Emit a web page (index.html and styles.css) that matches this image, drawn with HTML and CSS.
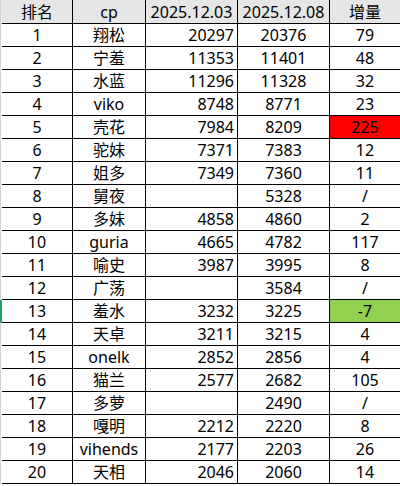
FILE: index.html
```html
<!DOCTYPE html>
<html lang="zh">
<head>
<meta charset="utf-8">
<link rel="stylesheet" href="styles.css">
</head>
<body>
<div class="sheet">
  <div class="row head"><div class="gut"></div><div class="c">排名</div><div class="c">cp</div><div class="c">2025.12.03</div><div class="c">2025.12.08</div><div class="c">增量</div></div>
  <div class="row"><div class="gut"></div><div class="c">1</div><div class="c">翔松</div><div class="c r">20297</div><div class="c">20376</div><div class="c">79</div></div>
  <div class="row"><div class="gut"></div><div class="c">2</div><div class="c">宁羞</div><div class="c r">11353</div><div class="c">11401</div><div class="c">48</div></div>
  <div class="row"><div class="gut"></div><div class="c">3</div><div class="c">水蓝</div><div class="c r">11296</div><div class="c">11328</div><div class="c">32</div></div>
  <div class="row"><div class="gut"></div><div class="c">4</div><div class="c">viko</div><div class="c r">8748</div><div class="c">8771</div><div class="c">23</div></div>
  <div class="row"><div class="gut"></div><div class="c">5</div><div class="c">壳花</div><div class="c r">7984</div><div class="c">8209</div><div class="c red">225</div></div>
  <div class="row"><div class="gut"></div><div class="c">6</div><div class="c">驼妹</div><div class="c r">7371</div><div class="c">7383</div><div class="c">12</div></div>
  <div class="row"><div class="gut"></div><div class="c">7</div><div class="c">姐多</div><div class="c r">7349</div><div class="c">7360</div><div class="c">11</div></div>
  <div class="row"><div class="gut"></div><div class="c">8</div><div class="c">舅夜</div><div class="c r"></div><div class="c">5328</div><div class="c">/</div></div>
  <div class="row"><div class="gut"></div><div class="c">9</div><div class="c">多妹</div><div class="c r">4858</div><div class="c">4860</div><div class="c">2</div></div>
  <div class="row"><div class="gut"></div><div class="c">10</div><div class="c">guria</div><div class="c r">4665</div><div class="c">4782</div><div class="c">117</div></div>
  <div class="row"><div class="gut"></div><div class="c">11</div><div class="c">喻史</div><div class="c r">3987</div><div class="c">3995</div><div class="c">8</div></div>
  <div class="row"><div class="gut"></div><div class="c">12</div><div class="c">广荡</div><div class="c r"></div><div class="c">3584</div><div class="c">/</div></div>
  <div class="row sel"><div class="gut"></div><div class="c">13</div><div class="c">羞水</div><div class="c r">3232</div><div class="c">3225</div><div class="c green">-7</div></div>
  <div class="row"><div class="gut"></div><div class="c">14</div><div class="c">天卓</div><div class="c r">3211</div><div class="c">3215</div><div class="c">4</div></div>
  <div class="row"><div class="gut"></div><div class="c">15</div><div class="c">onelk</div><div class="c r">2852</div><div class="c">2856</div><div class="c">4</div></div>
  <div class="row"><div class="gut"></div><div class="c">16</div><div class="c">猫兰</div><div class="c r">2577</div><div class="c">2682</div><div class="c">105</div></div>
  <div class="row"><div class="gut"></div><div class="c">17</div><div class="c">多萝</div><div class="c r"></div><div class="c">2490</div><div class="c">/</div></div>
  <div class="row"><div class="gut"></div><div class="c">18</div><div class="c">嘎明</div><div class="c r">2212</div><div class="c">2220</div><div class="c">8</div></div>
  <div class="row"><div class="gut"></div><div class="c">19</div><div class="c">vihends</div><div class="c r">2177</div><div class="c">2203</div><div class="c">26</div></div>
  <div class="row"><div class="gut"></div><div class="c">20</div><div class="c">天相</div><div class="c r">2046</div><div class="c">2060</div><div class="c">14</div></div>
</div>
</body>
</html>
```
FILE: styles.css
```css
html, body {
  margin: 0;
  padding: 0;
  background: #fff;
}
.sheet {
  width: 400px;
  height: 486px;
  overflow: hidden;
  font-family: "Noto Sans", "Noto Sans CJK SC", sans-serif;
  font-size: 16px;
  color: #000;
}
.row {
  display: grid;
  grid-template-columns: 2px 71px 73px 92px 92px 70px;
  height: 23px;
}
.row.head {
  height: 24px;
  background: #e7e6e6;
}
.gut {
  background: linear-gradient(to right, #d4d4d4 0 1px, #fff 1px 2px);
}
.head .gut {
  background: linear-gradient(to right, #d4d4d4 0 1px, #e7e6e6 1px 2px);
}
.sel .gut {
  background: #21a366;
}
.c {
  border-right: 1px solid #000;
  border-bottom: 1px solid #000;
  display: flex;
  align-items: center;
  justify-content: center;
  line-height: 1;
  white-space: nowrap;
  overflow: hidden;
}
.c:last-child {
  border-right: none;
}
.c.r {
  justify-content: flex-end;
  padding-right: 3px;
}
.red {
  background: #ff0000;
}
.green {
  background: #92d050;
}
```
